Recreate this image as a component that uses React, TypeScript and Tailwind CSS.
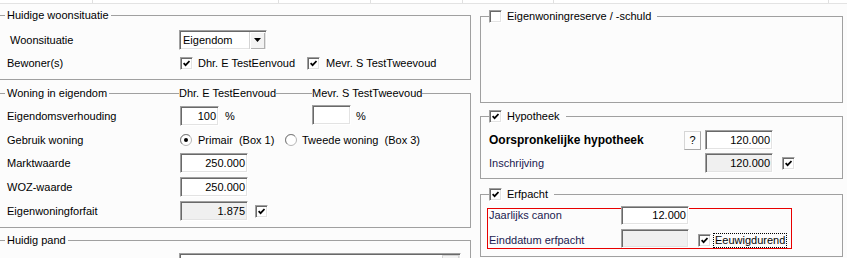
import React from 'react';

const sunken =
  'border border-t-[#a0a0a0] border-l-[#a0a0a0] border-r-white border-b-white shadow-[inset_1px_1px_0_#696969,inset_-1px_-1px_0_#e3e3e3]';

function Check({ checked }: { checked?: boolean }) {
  return (
    <span className={`inline-flex w-[13px] h-[13px] shrink-0 items-center justify-center bg-white ${sunken}`}>
      {checked && (
        <svg width="7" height="7" viewBox="0 0 7 7">
          <polyline points="0.6,3.1 2.6,5.2 6.5,1.1" fill="none" stroke="#000" strokeWidth="1.7" />
        </svg>
      )}
    </span>
  );
}

function Radio({ checked }: { checked?: boolean }) {
  return (
    <svg width="12" height="12" viewBox="0 0 12 12" className="shrink-0">
      <circle cx="6" cy="6" r="5.5" fill="#fff" stroke="#b5b5b5" />
      <path d="M2.1 9.9 A5.5 5.5 0 0 1 9.9 2.1" fill="none" stroke="#808080" strokeWidth="1" />
      {checked && <circle cx="6" cy="6" r="2" fill="#000" />}
    </svg>
  );
}

function Field({
  w,
  h = 'h-[20px]',
  value,
  disabled,
  extra = '',
}: {
  w: string;
  h?: string;
  value?: string;
  disabled?: boolean;
  extra?: string;
}) {
  return (
    <div
      className={`${w} ${h} shrink-0 ${disabled ? 'bg-[#f0f0f0]' : 'bg-white'} ${sunken} flex items-center justify-end pr-[2px] ${extra}`}
    >
      {value}
    </div>
  );
}

const line = 'h-[7px] self-end border-t border-[#a0a0a0]';

function Label({ children, w = 'w-[173px]', extra = '' }: { children: React.ReactNode; w?: string; extra?: string }) {
  return <span className={`${w} shrink-0 whitespace-nowrap ${extra}`}>{children}</span>;
}

function RightHeader({ title, checked, mt }: { title: string; checked?: boolean; mt: string }) {
  return (
    <div className={`flex h-[13px] items-center ${mt}`}>
      <div className={`w-[9px] ${line} border-l`} />
      <Check checked={checked} />
      <span className="ml-[5px] pr-[6px] whitespace-nowrap">{title}</span>
      <div className={`flex-1 ${line} border-r`} />
    </div>
  );
}

export default function App() {
  return (
    <div className="w-[847px] h-[258px] overflow-hidden bg-[#fcfcfc] text-[11px] leading-[13px] text-black flex flex-col font-['Liberation_Sans',Arial,sans-serif]">
      {/* top strip */}
      <div className="flex h-[4px] shrink-0 border-b border-[#e3e3e3] bg-white">
        <div className="w-[93px] border-r border-[#e0e0e0]" />
        <div className="w-[186px] border-r border-[#e0e0e0]" />
        <div className="w-[92px] border-r border-[#e0e0e0]" />
        <div className="w-[92px] border-r border-[#e0e0e0]" />
        <div className="w-[91px] border-r border-[#e0e0e0]" />
        <div className="w-[275px] border-r border-[#e0e0e0]" />
        <div className="flex-1" />
      </div>

      <div className="flex flex-1 min-h-0">
        {/* LEFT COLUMN */}
        <div className="w-[471px] shrink-0 flex flex-col pt-[5px]">
          {/* Huidige woonsituatie */}
          <div className="flex h-[13px]">
            <div className={`w-[5px] ${line}`} />
            <span className="px-[2px] whitespace-nowrap">Huidige woonsituatie</span>
            <div className={`flex-1 ${line} border-r`} />
          </div>
          <div className="border-r border-b border-[#a0a0a0] pl-[7px] pt-[8px] pb-[9px] flex flex-col">
            <div className="flex items-center h-[20px]">
              <Label extra="pl-[3px]">Woonsituatie</Label>
              <div className={`-ml-[1px] w-[88px] h-[20px] bg-white ${sunken} flex items-center`}>
                <span className="flex-1 pl-[3px]">Eigendom</span>
                <div className="w-[16px] h-[17px] mr-[1px] flex items-center justify-center bg-[#f3f3f3] shadow-[inset_1px_1px_0_#ffffff,inset_-1px_-1px_0_#b0b0b0] border-l border-[#d4d4d4]">
                  <svg width="7" height="4" viewBox="0 0 7 4">
                    <polygon points="0,0 7,0 3.5,4" fill="#000" />
                  </svg>
                </div>
              </div>
            </div>
            <div className="flex items-center h-[13px] mt-[7px]">
              <Label>Bewoner(s)</Label>
              <div className="w-[127px] flex items-center gap-[5px]">
                <Check checked />
                <span className="whitespace-nowrap">Dhr. E TestEenvoud</span>
              </div>
              <div className="flex items-center gap-[6px]">
                <Check checked />
                <span className="whitespace-nowrap">Mevr. S TestTweevoud</span>
              </div>
            </div>
          </div>

          {/* Woning in eigendom */}
          <div className="flex h-[13px] mt-[7px]">
            <div className="w-[179px] flex">
              <div className={`w-[5px] ${line}`} />
              <span className="px-[2px] whitespace-nowrap">Woning in eigendom</span>
              <div className={`flex-1 ${line}`} />
            </div>
            <div className="w-[133px] flex">
              <span className="whitespace-nowrap">Dhr. E TestEenvoud</span>
              <div className={`flex-1 ${line}`} />
            </div>
            <div className="flex-1 flex">
              <span className="whitespace-nowrap">Mevr. S TestTweevoud</span>
              <div className={`flex-1 ${line} border-r`} />
            </div>
          </div>
          <div className="border-r border-b border-[#a0a0a0] pl-[7px] pt-[6px] pb-[6px] flex flex-col">
            <div className="flex items-center h-[20px]">
              <Label>Eigendomsverhouding</Label>
              <div className="w-[132px] flex items-center gap-[6px]">
                <Field w="w-[39px]" value="100" />
                <span>%</span>
              </div>
              <div className="flex items-center gap-[5px] -mt-[3px]">
                <Field w="w-[39px]" />
                <span className="mt-[3px]">%</span>
              </div>
            </div>
            <div className="flex items-center h-[20px] mt-[4px]">
              <Label>Gebruik woning</Label>
              <div className="w-[105px] flex items-center gap-[6px]">
                <Radio checked />
                <span className="whitespace-pre">Primair  (Box 1)</span>
              </div>
              <div className="flex items-center gap-[5px]">
                <Radio />
                <span className="whitespace-pre">Tweede woning  (Box 3)</span>
              </div>
            </div>
            <div className="flex items-center h-[20px] mt-[3px]">
              <Label>Marktwaarde</Label>
              <Field w="w-[68px]" value="250.000" />
            </div>
            <div className="flex items-center h-[20px] mt-[4px]">
              <Label>WOZ-waarde</Label>
              <Field w="w-[68px]" value="250.000" />
            </div>
            <div className="flex items-center h-[20px] mt-[4px]">
              <Label>Eigenwoningforfait</Label>
              <Field w="w-[68px]" value="1.875" disabled />
              <span className="ml-[7px] flex">
                <Check checked />
              </span>
            </div>
          </div>

          {/* Huidig pand */}
          <div className="flex h-[13px] mt-[6px]">
            <div className={`w-[5px] ${line}`} />
            <span className="px-[2px] whitespace-nowrap">Huidig pand</span>
            <div className={`flex-1 ${line} border-r`} />
          </div>
          <div className="flex-1 border-r border-[#a0a0a0] pl-[7px] pt-[6px] flex">
            <Label> </Label>
            <div className={`-ml-[1px] w-[282px] h-[20px] bg-white ${sunken} flex justify-end`}>
              <div className="w-[17px] h-[17px] mt-[1px] mr-[1px] bg-[#f3f3f3] border border-[#d4d4d4]" />
            </div>
          </div>
        </div>

        {/* RIGHT COLUMN */}
        <div className="w-[363px] shrink-0 ml-[9px] flex flex-col pt-[6px]">
          <RightHeader title="Eigenwoningreserve / -schuld" mt="" />
          <div className="h-[80px] border-l border-r border-b border-[#a0a0a0]" />

          <RightHeader title="Hypotheek" checked mt="mt-[7px]" />
          <div className="border-l border-r border-b border-[#a0a0a0] pl-[8px] pt-[7px] pb-[5px] flex flex-col">
            <div className="flex items-center h-[20px]">
              <Label w="w-[195px]" extra="font-bold text-[12px]">
                Oorspronkelijke hypotheek
              </Label>
              <div className="w-[17px] h-[19px] shrink-0 flex items-center justify-center bg-[#fdfdfd] border border-[#d6d6d6] border-r-[#a8a8a8] border-b-[#a8a8a8]">
                ?
              </div>
              <Field w="w-[68px]" value="120.000" extra="ml-[4px]" />
            </div>
            <div className="flex items-center h-[20px] mt-[3px]">
              <Label w="w-[216px]" extra="text-[#1a1a50]">
                Inschrijving
              </Label>
              <Field w="w-[68px]" value="120.000" disabled />
              <span className="ml-[9px] flex">
                <Check checked />
              </span>
            </div>
          </div>

          <RightHeader title="Erfpacht" checked mt="mt-[9px]" />
          <div className="border-l border-r border-b border-[#a0a0a0] pl-[6px] pt-[7px] pb-[7px] flex flex-col">
            <div className="w-[305px] border border-[#e80000] pl-[1px] flex flex-col">
              <div className="flex items-center h-[19px] -mt-[3px]">
                <Label w="w-[132px]" extra="text-[#1a1a50]">
                  Jaarlijks canon
                </Label>
                <Field w="w-[68px]" h="h-[19px]" value="12.000" />
              </div>
              <div className="flex items-center h-[19px] mt-[4px]">
                <Label w="w-[132px]" extra="text-[#1a1a50] mt-[4px]">
                  Einddatum erfpacht
                </Label>
                <Field w="w-[68px]" h="h-[19px]" disabled />
                <span className="ml-[9px] mt-[4px] flex">
                  <Check checked />
                </span>
                <span className="ml-[2px] mt-[4px] px-[1px] border border-dotted border-black whitespace-nowrap">
                  Eeuwigdurend
                </span>
              </div>
            </div>
          </div>
        </div>
      </div>
    </div>
  );
}
